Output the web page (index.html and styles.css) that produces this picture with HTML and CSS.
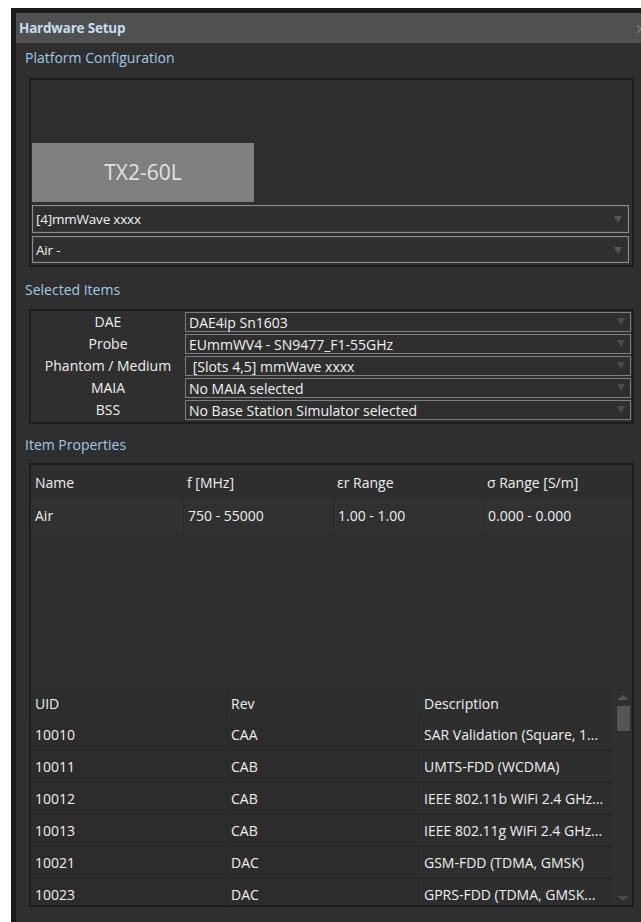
FILE: index.html
```html
<!DOCTYPE html>
<html>
<head>
<meta charset="utf-8">
<title>Hardware Setup</title>
<link rel="stylesheet" href="styles.css">
</head>
<body>
<div class="window">
  <div class="titlebar">
    <span class="title">Hardware Setup</span>
    <svg class="close" width="10" height="10" viewBox="0 0 10 10"><path d="M1 1 L9 9 M9 1 L1 9" stroke="#777777" stroke-width="1.6" fill="none"/></svg>
  </div>
  <div class="content">
    <div class="section-label">Platform Configuration</div>
    <div class="group platform">
      <div class="platform-space"></div>
      <div class="platform-tile">TX2-60L</div>
      <div class="combo combo-lg first"><span class="combo-text small">[4]mmWave xxxx</span><i class="arrow"></i></div>
      <div class="combo combo-lg second"><span class="combo-text small">Air -</span><i class="arrow"></i></div>
    </div>

    <div class="section-label">Selected Items</div>
    <div class="group selected">
      <div class="sel-row"><span class="sel-label">DAE</span><div class="combo combo-sm"><span class="combo-text">DAE4ip Sn1603</span><i class="arrow"></i></div></div>
      <div class="sel-row"><span class="sel-label">Probe</span><div class="combo combo-sm"><span class="combo-text">EUmmWV4 - SN9477_F1-55GHz</span><i class="arrow"></i></div></div>
      <div class="sel-row"><span class="sel-label">Phantom / Medium</span><div class="combo combo-sm"><span class="combo-text">&nbsp;[Slots 4,5] mmWave xxxx</span><i class="arrow"></i></div></div>
      <div class="sel-row"><span class="sel-label">MAIA</span><div class="combo combo-sm"><span class="combo-text">No MAIA selected</span><i class="arrow"></i></div></div>
      <div class="sel-row"><span class="sel-label">BSS</span><div class="combo combo-sm"><span class="combo-text">No Base Station Simulator selected</span><i class="arrow"></i></div></div>
    </div>

    <div class="section-label">Item Properties</div>
    <div class="group props">
      <div class="medium-table">
        <div class="mt-row mt-head">
          <div class="cell">Name</div>
          <div class="cell">f [MHz]</div>
          <div class="cell">&epsilon;r Range</div>
          <div class="cell">&sigma; Range [S/m]</div>
        </div>
        <div class="mt-row mt-data">
          <div class="cell">Air</div>
          <div class="cell">750 - 55000</div>
          <div class="cell">1.00 - 1.00</div>
          <div class="cell">0.000 - 0.000</div>
        </div>
      </div>
      <div class="props-space"></div>
      <div class="list">
        <div class="list-table">
          <div class="lt-row lt-head">
            <div class="cell">UID</div>
            <div class="cell">Rev</div>
            <div class="cell desc">Description</div>
          </div>
          <div class="lt-row"><div class="cell">10010</div><div class="cell">CAA</div><div class="cell desc">SAR Validation (Square, 1...</div></div>
          <div class="lt-row"><div class="cell">10011</div><div class="cell">CAB</div><div class="cell desc">UMTS-FDD (WCDMA)</div></div>
          <div class="lt-row"><div class="cell">10012</div><div class="cell">CAB</div><div class="cell desc">IEEE 802.11b WiFi 2.4 GHz...</div></div>
          <div class="lt-row"><div class="cell">10013</div><div class="cell">CAB</div><div class="cell desc">IEEE 802.11g WiFi 2.4 GHz...</div></div>
          <div class="lt-row"><div class="cell">10021</div><div class="cell">DAC</div><div class="cell desc">GSM-FDD (TDMA, GMSK)</div></div>
          <div class="lt-row"><div class="cell">10023</div><div class="cell">DAC</div><div class="cell desc">GPRS-FDD (TDMA, GMSK...</div></div>
        </div>
        <div class="scrollbar">
          <i class="sb-up"></i>
          <div class="sb-thumb"></div>
          <div class="sb-track"></div>
          <i class="sb-down"></i>
        </div>
      </div>
    </div>
  </div>
</div>
</body>
</html>
```

FILE: styles.css
```css
html, body {
  margin: 0;
  padding: 0;
  background: #ffffff;
}

body {
  width: 641px;
  height: 922px;
  overflow: hidden;
  font-family: "Open Sans", "Noto Sans", sans-serif;
  font-size: 14px;
  color: #f0f0f0;
}

/* dialog frame */
.window {
  margin: 8px 0 0 11px;
  height: 914px;
  box-sizing: border-box;
  border-top: 5px solid #1b1b1b;
  border-left: 5px solid #1b1b1b;
  background: #2f2f2f;
  display: flex;
  flex-direction: column;
  overflow: hidden;
}

.titlebar {
  height: 30px;
  flex: none;
  background: #505050;
  display: flex;
  align-items: center;
  justify-content: space-between;
  padding-left: 3px;
  overflow: hidden;
}

.title {
  font-weight: 700;
  font-size: 13.5px;
  color: #c6def2;
  letter-spacing: -0.2px;
}

.close {
  flex: none;
  margin-right: -5px;
  margin-top: 1px;
}

.content {
  display: flex;
  flex-direction: column;
  padding: 0 7px 0 13px;
}

.section-label {
  height: 20px;
  line-height: 20px;
  margin-left: -4px;
  color: #a3c8e8;
  font-size: 14px;
}

.section-label:nth-of-type(1) { margin: 5px 0 10px -4px; }

.group {
  border: 2px solid #1e1e1e;
  display: flex;
  flex-direction: column;
}

/* platform configuration */
.platform {
  padding: 0 3px 2px 1px;
}

.platform-space { height: 63px; }

.platform-tile {
  width: 222px;
  height: 59px;
  background: #7f7f7f;
  color: #e2e2e2;
  font-size: 21px;
  display: flex;
  align-items: center;
  justify-content: center;
  padding-bottom: 2px;
  box-sizing: border-box;
}

.combo {
  position: relative;
  box-sizing: border-box;
  border: 1px solid #8c8c8c;
  box-shadow: inset 0 0 0 1px #3a3a3a;
  display: flex;
  align-items: center;
  padding-left: 3px;
  background: #2f2f2f;
}

.combo-lg { height: 28px; margin-top: 3px; }
.combo-lg.second { height: 27px; }

.combo-text {
  color: #f2f2f2;
  white-space: nowrap;
}

.combo-text.small { font-size: 13.5px; letter-spacing: -0.2px; }

.arrow {
  position: absolute;
  right: 6px;
  top: 50%;
  margin-top: -3px;
  width: 0;
  height: 0;
  border-left: 4px solid transparent;
  border-right: 4px solid transparent;
  border-top: 7px solid #565656;
}

/* selected items */
.section-label:nth-of-type(3) { margin: 13px 0 9px -4px; }

.selected {
  padding: 1px 1px 2px 0;
  gap: 2px;
}

.sel-row {
  display: flex;
  height: 20px;
}

.sel-label {
  width: 154px;
  flex: none;
  text-align: center;
  line-height: 20px;
  color: #f0f0f0;
}

.combo-sm {
  flex: 1;
  height: 20px;
  border-color: #7e7e7e;
  box-shadow: none;
}

.combo-sm .arrow { right: 5px; margin-top: -4px; border-top-color: #4c4c4c; }

/* item properties */
.section-label:nth-of-type(5) { margin: 11px 0 8px -4px; }

.props {
  height: 444px;
  box-sizing: border-box;
}

.mt-row {
  display: grid;
  grid-template-columns: 152px 150px 150px 1fr;
}

.mt-head { height: 34px; background: #2e2e2e; }
.mt-data { height: 32px; background: #313131; }

.mt-row .cell {
  padding-left: 4px;
  display: flex;
  align-items: center;
  white-space: nowrap;
}

.mt-data .cell + .cell { border-left: 1px solid #2a2a2a; }

.props-space { height: 156px; flex: none; }

.list {
  display: flex;
  height: 218px;
  overflow: hidden;
}

.list-table {
  width: 580px;
  flex: none;
}

.lt-row {
  display: grid;
  grid-template-columns: 195px 193px 1fr;
  height: 32px;
  background: #2c2c2c;
  border-bottom: 1px solid #272727;
  box-sizing: border-box;
}

.lt-head { background: #2e2e2e; border-bottom: none; }

.lt-row .cell {
  padding-left: 4px;
  display: flex;
  align-items: center;
  white-space: nowrap;
  overflow: hidden;
}

.lt-row .cell + .cell { border-left: 1px solid #292929; }
.lt-row .desc { background: #2e2e2e; }

.scrollbar {
  flex: 1;
  position: relative;
  display: flex;
  flex-direction: column;
  align-items: center;
  padding-left: 3px;
}

.sb-up {
  margin-top: 8px;
  width: 0;
  height: 0;
  border-left: 6px solid transparent;
  border-right: 6px solid transparent;
  border-bottom: 5px solid #555555;
}

.sb-thumb {
  margin-top: 6px;
  width: 13px;
  height: 25px;
  background: #555555;
}

.sb-track { flex: 1; }

.sb-down {
  margin-bottom: 4px;
  width: 0;
  height: 0;
  border-left: 6px solid transparent;
  border-right: 6px solid transparent;
  border-top: 5px solid #4a4a4a;
}
```
